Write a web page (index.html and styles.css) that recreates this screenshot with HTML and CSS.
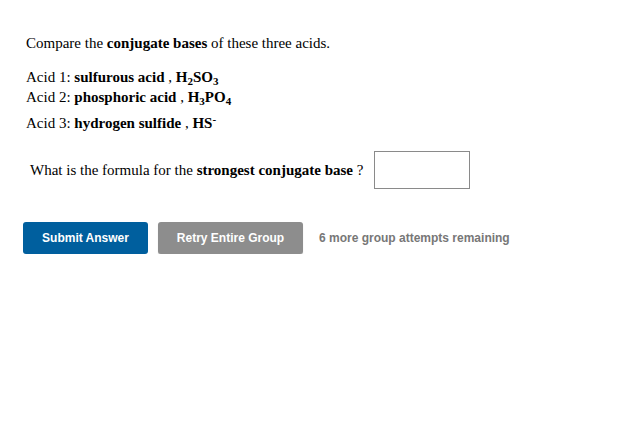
FILE: index.html
```html
<!DOCTYPE html>
<html>
<head>
<meta charset="utf-8">
<link rel="stylesheet" href="styles.css">
</head>
<body>
<div class="page">
  <p class="intro">Compare the <b>conjugate bases</b> of these three acids.</p>
  <div class="acids">
    <div class="acid">Acid 1: <b>sulfurous acid</b> , <b>H<sub>2</sub>SO<sub>3</sub></b></div>
    <div class="acid">Acid 2: <b>phosphoric acid</b> , <b>H<sub>3</sub>PO<sub>4</sub></b></div>
    <div class="acid acid3">Acid 3: <b>hydrogen sulfide</b> , <b>HS<sup>-</sup></b></div>
  </div>
  <div class="question">
    <span class="qtext">What is the formula for the <b>strongest conjugate base</b> ?</span>
    <input class="answer" type="text">
  </div>
  <div class="actions">
    <button class="btn btn-submit">Submit Answer</button>
    <button class="btn btn-retry">Retry Entire Group</button>
    <span class="remaining">6 more group attempts remaining</span>
  </div>
</div>
</body>
</html>
```
FILE: styles.css
```css
html, body {
  margin: 0;
  padding: 0;
  background: #ffffff;
}
.page {
  padding: 33px 0 0 26px;
  font-family: "Liberation Serif", "Times New Roman", serif;
  font-size: 15px;
  color: #000;
}
.intro {
  margin: 0;
  line-height: 20px;
}
.acids {
  margin-top: 14px;
}
.acid {
  line-height: 20px;
}
.acid3 {
  margin-top: 6px;
}
sub, sup {
  font-size: 11px;
  line-height: 0;
}
sub { vertical-align: -3px; }
sup { vertical-align: 5px; }
.question {
  display: flex;
  align-items: center;
  margin-top: 18px;
  padding-left: 4px;
}
.qtext {
  line-height: 20px;
}
.answer {
  box-sizing: border-box;
  width: 96px;
  height: 38px;
  border: 1px solid #8a8a8a;
  margin: 0 0 0 11px;
  padding: 0;
  outline: none;
}
.actions {
  display: flex;
  align-items: center;
  margin-top: 33px;
  margin-left: -3px;
}
.btn {
  font-family: "Liberation Sans", Arial, sans-serif;
  font-weight: bold;
  font-size: 12px;
  color: #fff;
  border: none;
  border-radius: 3px;
  height: 32px;
  padding: 0;
  margin: 0;
}
.btn-submit {
  width: 125px;
  background: #005f9e;
}
.btn-retry {
  width: 145px;
  margin-left: 10px;
  background: #8d8d8d;
  box-shadow: 0 1px 1px rgba(0,0,0,0.2);
}
.remaining {
  margin-left: 16px;
  font-family: "Liberation Sans", Arial, sans-serif;
  font-weight: bold;
  font-size: 12px;
  color: #777;
}
```
